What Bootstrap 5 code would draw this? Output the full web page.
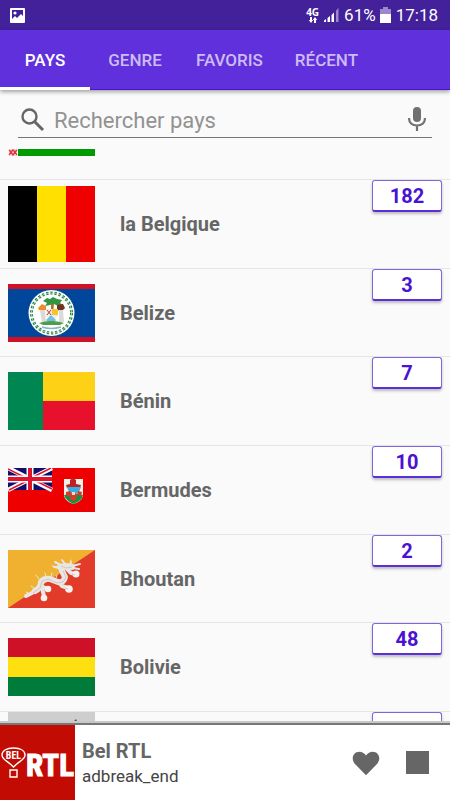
<!DOCTYPE html>
<html lang="fr">
<head>
<meta charset="utf-8">
<meta name="viewport" content="width=device-width, initial-scale=1">
<title>Radio – Pays</title>
<link href="https://cdn.jsdelivr.net/npm/bootstrap@5.3.0/dist/css/bootstrap.min.css" rel="stylesheet">
<style>
body { font-family: Roboto, "Open Sans", sans-serif; background: #fafafa; color: #666; }
svg { display: block; flex: none; }
.status-bar { height: 30px; background: #42219a; color: #fff; font-size: 17px; line-height: 32px; padding: 0 12px 0 10px; }
.status-time { margin-left: 5px; }
.net-type { font: 700 10px/10px "Noto Sans", sans-serif; }
.tab-strip { height: 60px; background: #6030dc; box-shadow: 0 2px 4px rgba(0,0,0,.35); z-index: 2; border-bottom: 1px solid #4a10d0; }
.tab-strip .nav-link { min-width: 90px; height: 60px; padding: 0 16px; border-radius: 0; border: 0; border-bottom: 3px solid transparent; color: #cdbcf4; font-size: 17px; font-weight: 500; line-height: 61px; text-align: center; }
.tab-strip .nav-link.active { color: #fff; background: none; border-bottom-color: #fff; }
.search-area { padding: 12px 18px 0; height: 59px; }
.search-line { height: 36px; border-bottom: 1px solid #777; padding: 0 4px 0 3px; }
.search-line .form-control { height: 36px; font-size: 22px; line-height: 32px; padding: 2px 9px 0; color: #555; box-shadow: none; }
.search-line .form-control::placeholder { color: #929292; opacity: 1; }
.country-list { min-height: 0; border-bottom: 2px solid #c8c8c8; }
.country-row { flex: 1 0 0; min-height: 80px; padding: 0 8px; border-top: 1px solid #e6e6e6; color: #666; font-size: 20px; font-weight: 700; text-decoration: none; }
.country-row .name { margin-left: 25px; }
.row-before { height: 30px; padding: 0 8px; }
.row-after { flex: 0 0 10px; min-height: 0; }
.count { width: 70px; height: 32px; border: 1px solid #8264e0; border-bottom: 2px solid #5b2ed8; border-radius: 3px; background: #fff; color: #4a12d2; font-size: 20px; line-height: 31px; text-align: center; box-shadow: 0 2px 3px rgba(0,0,0,.25); }
.player { border-top: 2px solid #777; background: #fff; }
.track { padding: 2px 0 0 7px; line-height: 25px; }
.track-title { font-size: 20px; font-weight: 700; color: #666; }
.track-sub { font-size: 17px; color: #444; }
.player-actions { gap: 26px; padding-right: 21px; }
</style>
</head>
<body>
<div class="vh-100 d-flex flex-column overflow-hidden">
  <div class="status-bar d-flex align-items-center flex-shrink-0">
    <svg width="15" height="15" viewBox="0 0 15 15" aria-hidden="true"><path fill="#fff" fill-rule="evenodd" d="M1 0h13q1 0 1 1v13q0 1-1 1H1q-1 0-1-1V1q0-1 1-1zM2 2v9l3-3 2 2 4-4 2 2V2z"/><circle cx="5" cy="5" r="1.6" fill="#fff"/></svg>
    <div class="ms-auto d-flex align-items-center">
      <div class="net-type"><span>4G</span>
        <svg class="mx-auto" width="10" height="6" viewBox="0 0 10 6" fill="#fff" aria-hidden="true"><path d="M2 0h2v3h1.200L3 6 .8 3H2zM6 6h2V3h1.200L7 0 4.800 3H6z"/></svg></div>
      <svg class="ms-1" width="17" height="16" viewBox="0 0 17 16" aria-hidden="true"><path fill="#fff" d="M1 13.500 3 12v3H1zM4.500 11 7 9v6H4.500zM8.500 8 11 5.500V15H8.500z"/><path fill="#9c86cc" d="M13 3.500 15.500 1v14H13z"/></svg>
      <span class="ms-1">61%</span>
      <svg class="ms-1" width="11" height="16" viewBox="0 0 11 16" aria-hidden="true"><path fill="#9c86cc" d="M3 0h5v2h3v5H0V2h3z"/><path fill="#fff" d="M0 7h11v9H0z"/></svg>
      <span class="status-time">17:18</span>
    </div>
  </div>

  <nav class="tab-strip nav flex-nowrap flex-shrink-0 position-relative" aria-label="Sections">
    <a class="nav-link active" href="#pays" aria-current="page">PAYS</a>
    <a class="nav-link" href="#genre">GENRE</a>
    <a class="nav-link" href="#favoris">FAVORIS</a>
    <a class="nav-link" href="#recent">RÉCENT</a>
  </nav>

  <form class="search-area flex-shrink-0">
    <div class="search-line d-flex align-items-center">
      <label for="q">
        <svg width="24" height="24" viewBox="0 0 24 24" fill="none" stroke="#666" role="img" aria-label="Rechercher pays"><circle cx="8.500" cy="8.500" r="7" stroke-width="2.400"/><path d="m13.500 13.500 8.500 8.500" stroke-width="3"/></svg></label>
      <input id="q" type="text" class="form-control border-0 bg-transparent" placeholder="Rechercher pays">
      <button type="button" class="btn p-0 border-0" aria-label="Recherche vocale">
        <svg width="22" height="28" viewBox="0 0 22 28" aria-hidden="true"><rect x="7" y="1" width="8" height="15" rx="4" fill="#707070"/><path d="M3 12c0 5 3.500 7.500 8 7.500s8-2.500 8-7.500M11 19v6" fill="none" stroke="#707070" stroke-width="2.200"/></svg></button>
    </div>
  </form>

  <main class="country-list flex-fill d-flex flex-column overflow-hidden">
    <div class="row-before flex-shrink-0">
      <svg width="87" height="7" viewBox="0 0 87 7" aria-hidden="true"><path fill="#009b00" d="M10 0h77v7H10z"/><path fill="#f6cfd0" d="M1 0h8v7H1z"/><path d="m1 1 2 2 2-2 2 2 2-2M1 6l2-3 2 3 2-3 2 3" fill="none" stroke="#d8333c" stroke-width="1.300"/></svg>
    </div>
    <a href="#belgique" class="country-row d-flex align-items-center">
      <svg width="87" height="76" viewBox="0 0 87 76" aria-hidden="true"><path d="M0 0h29v76H0z"/><path fill="#ffe000" d="M29 0h29v76H29z"/><path fill="#ef0000" d="M58 0h29v76H58z"/></svg>
      <span class="name">la Belgique</span><span class="count ms-auto align-self-start">182</span>
    </a>
    <a href="#belize" class="country-row d-flex align-items-center">
      <svg width="87" height="58" viewBox="0 0 87 58" aria-hidden="true">
        <path fill="#ce1126" d="M0 0h87v58H0z"/><path fill="#00479b" d="M0 5h87v48H0z"/>
        <circle cx="43.500" cy="29" r="23" fill="#fff"/>
        <circle cx="43.500" cy="29" r="20" fill="none" stroke="#258544" stroke-width="3" stroke-dasharray="2.400 1.800"/>
        <circle cx="43.500" cy="29" r="20" fill="none" stroke="#d9eedd" stroke-width=".7"/>
        <path fill="#319640" d="m35 17 4-3 3 1 3-2 4 2 5 1-2 3 3 2-5 1-4-2-4 1-5 1 2-3z"/>
        <path d="M43 20h3l-1 9h-2z" fill="#a86f37"/>
        <path d="m30 24 4-4 4 2v4h-7z" fill="#ed8a2d"/><path d="m49 21 6-1 2 4-3 3-5-1z" fill="#713321"/>
        <path d="M32 26h5l1 13h-4zM51 26h4l1 12-5 1z" fill="#ddd9d7"/>
        <path d="M38 25h12v7l-6 6-6-6z" fill="#f3ede5"/><path d="M44 25h6v6h-6z" fill="#f4c52d"/><path d="m39 26 4 5m0-5-4 5" stroke="#c23a2b"/>
        <path d="m38 36 5-5 5 5-2 3h-6z" fill="#72bfe4"/>
        <path d="M31 39q12-4 25 0l-4 2H35z" fill="#4ca044"/><path d="M34 43q9 3 19 0" fill="none" stroke="#8eb0ce" stroke-width="1.500"/>
      </svg>
      <span class="name">Belize</span><span class="count ms-auto align-self-start">3</span>
    </a>
    <a href="#benin" class="country-row d-flex align-items-center">
      <svg width="87" height="58" viewBox="0 0 87 58" aria-hidden="true"><path fill="#008751" d="M0 0h35v58H0z"/><path fill="#fcd116" d="M35 0h52v29H35z"/><path fill="#e8112d" d="M35 29h52v29H35z"/></svg>
      <span class="name">Bénin</span><span class="count ms-auto align-self-start">7</span>
    </a>
    <a href="#bermudes" class="country-row d-flex align-items-center">
      <svg width="87" height="44" viewBox="0 0 87 44" aria-hidden="true">
        <path fill="#ef0000" d="M0 0h87v44H0z"/><path fill="#10106c" d="M0 0h44v22H0z"/>
        <path d="m0 0 44 22M44 0 0 22" stroke="#fff" stroke-width="4.500"/><path d="m0 1 20 10M44 21 24 11M43 0 23 10M1 22l20-10" stroke="#e0142a" stroke-width="1.500"/>
        <path d="M22 0v22M0 11h44" stroke="#fff" stroke-width="7"/><path d="M22 0v22M0 11h44" stroke="#e0142a" stroke-width="4"/>
        <path fill="#f4f0e7" d="M56 11h19v17q-2 6-9.500 8Q58 34 56 28z"/>
        <path fill="#129247" d="M56 27q10-3 19 0-1 6-9.500 9Q58 33 56 27z"/>
        <path fill="#bd2222" d="m62 12 3-2 3 2v4l5 1-1 3H59l-1-3 4-1z"/>
        <path fill="#38aee2" d="M59 19h14l-2 5-5 3-5-3z"/><path fill="#d63c28" d="m58 24 4-1 2 3-3 3-3-2zM70 23l4 1-1 4-4-1zM63 27l3-3 3 3-1 5-3 1-3-2z"/><path fill="#f5dabe" d="M64 24h3v3h-3z"/>
      </svg>
      <span class="name">Bermudes</span><span class="count ms-auto align-self-start">10</span>
    </a>
    <a href="#bhoutan" class="country-row d-flex align-items-center">
      <svg width="87" height="58" viewBox="0 0 87 58" aria-hidden="true">
        <path fill="#e23b2a" d="M0 0h87v58H0z"/><path fill="#efb12f" d="M0 0h87L0 58z"/>
        <g fill="none" stroke="#e9e6e3" stroke-linecap="round" stroke-linejoin="round">
          <path stroke-width="6" d="M27 41q6-3 6-9 3-4 9-3l8 3q6 1 7-5l-3-6"/>
          <path stroke-width="4" d="m18 46 6-3 5-4M33 36l7 3M51 32l3 4 6 2M58 18l5 5 5 1M34 38l2 8"/>
          <path stroke-width="6" d="m52 17 6-1 6 1"/>
          <path stroke-width="2" d="m47 12 6 3m1-5 3 4m6-2-1 4m2 0 8-2m-7 4 6 1M46 17l6 1"/>
          <path stroke-width="1" d="M44 16l7 1m12-7-1 4M31 29l-3-4M38 27l-1-4M43 27l1-4M48 28l1-3M20 43l-2-1M26 38l-3-2"/>
        </g>
        <g fill="#f5f1ee"><circle cx="68" cy="24" r="3.500"/><circle cx="61" cy="39" r="3.800"/><circle cx="40" cy="39" r="3.300"/><circle cx="36" cy="48" r="3.300"/></g>
        <path fill="none" stroke="#b9b1ac" stroke-width=".6" d="m25 43 7-5 2-7 6-2 9 4 6-1 3-5-3-6M53 16l5 2 6-1M57 38l3 1m4-15 3 1"/>
      </svg>
      <span class="name">Bhoutan</span><span class="count ms-auto align-self-start">2</span>
    </a>
    <a href="#bolivie" class="country-row d-flex align-items-center">
      <svg width="87" height="58" viewBox="0 0 87 58" aria-hidden="true"><path fill="#ce1126" d="M0 0h87v19H0z"/><path fill="#fee011" d="M0 19h87v20H0z"/><path fill="#007b3a" d="M0 39h87v19H0z"/></svg>
      <span class="name">Bolivie</span><span class="count ms-auto align-self-start">48</span>
    </a>
    <div class="country-row row-after d-flex overflow-hidden">
      <svg width="87" height="58" viewBox="0 0 87 58" aria-hidden="true"><path fill="#cecece" d="M0 0h87v58H0z"/><path fill="#555" d="m66 9 2-2 1 2z"/></svg>
      <span class="count ms-auto"></span>
    </div>
  </main>

  <footer class="player d-flex align-items-center flex-shrink-0">
    <svg width="75" height="75" viewBox="0 0 75 75" role="img" aria-label="Bel RTL">
      <path fill="#c20b02" d="M0 0h75v75H0z"/>
      <path d="M13.500 23C6 23 2 26 2 30c0 5 6 6 11.500 12C19 36 25 35 25 30c0-4-4-7-11.500-7zM10 45h7v7h-7z" fill="none" stroke="#fff" stroke-width="1.400"/>
      <text x="13.500" y="34" text-anchor="middle" font-family="'Roboto Condensed','Liberation Sans Narrow','Liberation Sans',sans-serif" font-weight="700" font-size="10" fill="#fff">BEL</text>
      <text x="50" y="51" text-anchor="middle" font-family="'Roboto Condensed','Liberation Sans Narrow','Liberation Sans',sans-serif" font-weight="700" font-size="31" fill="#fff" stroke="#fff">RTL</text>
    </svg>
    <div class="track">
      <div class="track-title">Bel RTL</div>
      <div class="track-sub">adbreak_end</div>
    </div>
    <div class="player-actions d-flex align-items-center ms-auto">
      <button type="button" class="btn p-0 border-0" aria-label="Ajouter aux favoris"><svg width="28" height="26" viewBox="0 0 30 26" aria-hidden="true"><path fill="#666" d="M15 26 4 15C-2 9 1 1 8 1q4 0 7 4 3-4 7-4c7 0 10 8 4 14z"/></svg></button>
      <button type="button" class="btn p-0 border-0" aria-label="Arrêter"><svg width="23" height="23" viewBox="0 0 23 23" aria-hidden="true"><path fill="#666" d="M0 0h23v23H0z"/></svg></button>
    </div>
  </footer>
</div>
<script src="https://cdn.jsdelivr.net/npm/bootstrap@5.3.0/dist/js/bootstrap.bundle.min.js"></script>
</body>
</html>
